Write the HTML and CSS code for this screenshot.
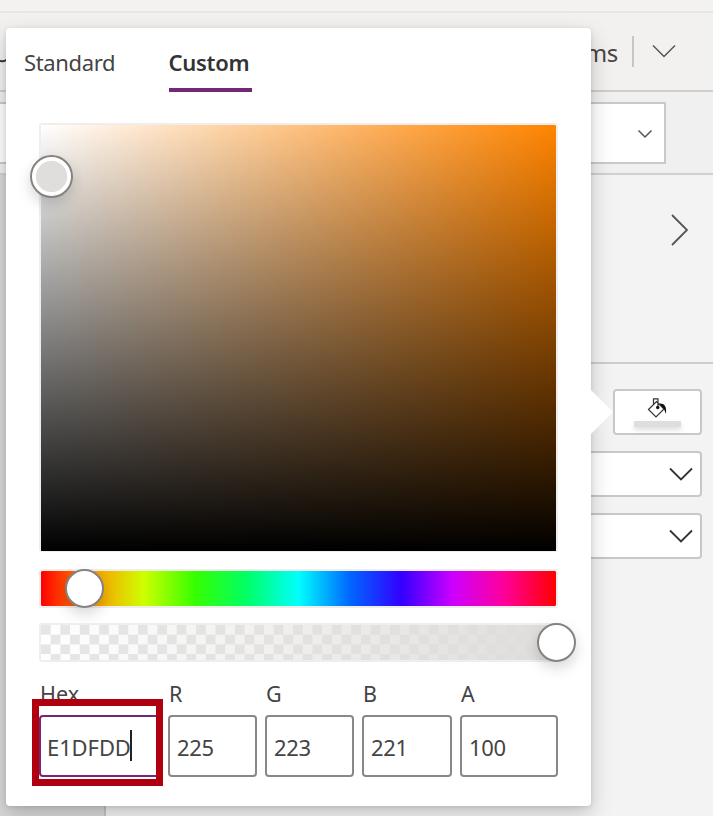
FILE: index.html
```html
<!DOCTYPE html>
<html lang="en">
<head>
<meta charset="utf-8">
<title>Color picker</title>
<link rel="stylesheet" href="styles.css">
</head>
<body>
<div class="app">
  <div class="titlebar"></div>
  <header class="toolbar">
    <svg class="cut" width="8" height="8" viewBox="0 0 8 8"><path d="M0 4.500Q3 6.500 7 3.500"/></svg>
    <span class="menu">ms</span>
    <span class="divider"></span>
    <svg class="chev-menu" width="26" height="16" viewBox="0 0 26 16"><path d="M2 2.5 13 13.5 24 2.5"/></svg>
  </header>
  <div class="formula">
    <div class="formula-box"><svg width="16" height="10" viewBox="0 0 16 10"><path d="M1.5 1.5 8 8 14.500 1.500"/></svg></div>
  </div>
  <main class="work">
    <div class="left"></div>
    <div class="canvas"></div>
    <aside class="props">
      <div class="props-head"><svg width="20" height="34" viewBox="0 0 20 34"><path d="M2 2 17 17 2 32"/></svg></div>
      <div class="props-body">
        <div class="fill">
          <svg width="22" height="22" viewBox="0 0 22 22">
            <path class="line" d="M1.500 11.500 9.500 3.500 17 11 9 19ZM6.500 6.500V.8H11V10"/>
            <circle cx="10.700" cy="9.500" r="1.700"/>
            <path d="M12 5.500C17 5 20 8 19 15.500 18 15 18 11 15.500 9.500Z"/>
          </svg>
          <span class="swatch"></span>
        </div>
        <div class="select"><svg width="26" height="16" viewBox="0 0 26 16"><path d="M2 2.500 13 13.500 24 2.500"/></svg></div>
        <div class="select"><svg width="26" height="16" viewBox="0 0 26 16"><path d="M2 2.500 13 13.500 24 2.500"/></svg></div>
      </div>
    </aside>
  </main>
</div>
<section class="popup">
  <span class="beak"></span>
  <nav class="tabs"><span class="tab">Standard</span><span class="tab active">Custom</span></nav>
  <div class="picker">
    <div class="field"><div class="shade"></div><span class="thumb big"></span></div>
    <div class="hue"><span class="thumb hue-thumb"></span></div>
    <div class="alpha"><div class="checks"></div><span class="thumb alpha-thumb"></span></div>
    <div class="inputs">
      <label><span>Hex</span><b class="focus"><i class="hex">E1DFDD</i><em></em></b></label>
      <label><span>R</span><b><i>225</i></b></label>
      <label><span>G</span><b><i>223</i></b></label>
      <label><span>B</span><b><i>221</i></b></label>
      <label><span>A</span><b><i>100</i></b></label>
      <div class="highlight"></div>
    </div>
  </div>
</section>
</body>
</html>
```
FILE: styles.css
```css
* { box-sizing: border-box; }
body { margin: 0; width: 713px; height: 816px; overflow: hidden; position: relative; background: #f3f3f3; color: #444; font: 22px/30px "Noto Sans", "Open Sans", sans-serif; }
svg { display: block; fill: none; stroke: #555; stroke-width: 1.5; }
.app { display: flex; flex-direction: column; height: 816px; }
.titlebar { height: 13px; background: #f3f2f1; border-bottom: 2px solid #e8e6e5; }
.toolbar { height: 79px; background: #f2f1ef; border-bottom: 2px solid #cfcecd; display: flex; align-items: center; padding: 0 36px 0 0; }
.cut { margin-top: 16px; stroke: #333; stroke-width: 2; }
.menu { margin-left: auto; font-size: 24px; color: #484644; letter-spacing: -.3px; padding-top: 2px; }
.divider { width: 2px; height: 31px; background: #c8c6c4; margin: 0 17px 0 14px; }
.chev-menu { margin-top: -1px; }
.formula { height: 83px; background: #f0f0f0; border-bottom: 2px solid #d0d0d0; padding: 10px 47px 10px 0; }
.formula-box { height: 62px; background: #fff; border: 2px solid #c9c9c9; border-left: 0; display: flex; align-items: center; justify-content: flex-end; padding: 2px 11px 0 0; }
.work { flex: 1; display: flex; }
.left { width: 106px; background: #d8d8d8; border-right: 2px solid #c4c4c4; }
.canvas { width: 374px; background: #f3f3f3; }
.props { flex: 1; background: #f3f3f3; }
.props-head { height: 189px; border-bottom: 2px solid #cdcdcd; padding: 38px 23px 0 0; display: flex; justify-content: flex-end; }
.props-head svg { stroke-width: 1.8; }
.props-body { padding: 25px 11px 0 0; display: flex; flex-direction: column; align-items: flex-end; gap: 16px; }
.fill, .select { height: 46px; border: 2px solid #c8c8c8; border-radius: 4px; background: #fff; display: flex; }
.fill { width: 89px; flex-direction: column; align-items: center; padding-top: 7px; }
.fill svg { fill: #111; stroke: none; }
.fill .line { fill: none; stroke: #333; stroke-width: 1.2; }
.swatch { width: 47px; height: 6px; margin-top: 1px; background: #dfdedd; box-shadow: 0 3px 5px #0002; }
.select { width: 200px; align-items: center; justify-content: flex-end; padding: 0 6px 0 0; }
.select svg { stroke: #333; stroke-width: 1.8; }

.popup { position: absolute; left: 6px; top: 28px; width: 585px; height: 778px; background: #fff; border-radius: 4px; box-shadow: 0 9px 22px rgba(0,0,0,.19), 0 1px 5px rgba(0,0,0,.12); }
.beak { position: absolute; left: 585px; top: 362px; width: 22px; height: 44px; background: #fff; clip-path: polygon(0 0, 100% 50%, 0 100%); }
.tabs { display: flex; gap: 53px; height: 64px; padding: 19px 0 0 18px; }
.tab { height: 45px; width: 91.500px; letter-spacing: -.35px; white-space: nowrap; }
.tab.active { width: 83px; font-weight: 600; color: #333; letter-spacing: -.3px; border-bottom: 4px solid #742774; }
.picker { padding: 31px 33px 0 33px; }
.field, .hue, .alpha { position: relative; width: 519px; border: 2px solid #efeeed; border-radius: 3px; }
.field { height: 429px; border-bottom-width: 1px; background: linear-gradient(to right, #fff, #ff8400); background-clip: padding-box; }
.hue { background-clip: padding-box; }
.shade { height: 100%; background: linear-gradient(to bottom, transparent, #000); }
.thumb { position: absolute; width: 39px; height: 39px; border: 2px solid #858381; border-radius: 50%; background: #fff; box-shadow: 0 6px 14px rgba(0,0,0,.16); }
.big { width: 43px; height: 43px; left: -11px; top: 30px; background: radial-gradient(circle, #dfdedd 15.2px, #fff 16px); }
.hue { height: 39px; margin-top: 17px; background-image: linear-gradient(to left, red 0, #f09 10%, #cd00ff 20%, #3200ff 30%, #06f 40%, #00fffd 50%, #0f6 60%, #35ff00 70%, #cdff00 80%, #f90 90%, red 100%); }
.hue-thumb { left: 24px; top: -2px; }
.alpha { height: 39px; margin-top: 15px; }
.checks { height: 35px; background: linear-gradient(to right, transparent, #dfdddb), repeating-conic-gradient(#fff 0 25%, #e6e6e6 0 50%) 0 0 / 19.4px 19.4px; }
.alpha-thumb { left: 496px; top: -2px; }
.inputs { position: relative; display: grid; grid-template-columns: 121px 89px 89px 90px 98px; column-gap: 8px; margin-top: 16px; width: 519px; }
.inputs label { display: flex; flex-direction: column; }
.inputs label > span { height: 37px; line-height: 31px; font-size: 21.500px; padding-left: 1px; }
.inputs b { height: 62px; border: 2px solid #8a8886; border-radius: 4px; display: flex; align-items: center; padding: 2px 0 0 7px; font-weight: 400; }
.inputs i { font-style: normal; letter-spacing: -.3px; }
.inputs .hex { letter-spacing: -.1px; }
.inputs .focus { border-color: #742774; padding-left: 6px; }
.inputs em { width: 2px; height: 31px; background: #222; margin: -4px 0 0 -1px; }
.highlight { position: absolute; left: -7px; top: 21px; width: 131px; height: 87px; border: 7px solid #b0000f; }
```
